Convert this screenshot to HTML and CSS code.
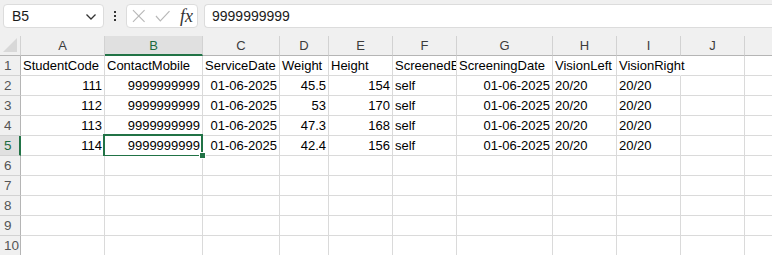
FILE: index.html
```html
<!DOCTYPE html>
<html>
<head>
<meta charset="utf-8">
<link rel="stylesheet" href="styles.css">
</head>
<body>
<div class="app">
  <div class="toolbar">
    <div class="namebox">
      <span class="name">B5</span>
      <svg class="chev" width="12" height="8" viewBox="0 0 12 8"><path d="M1.5 1.5 L6 6 L10.5 1.5" fill="none" stroke="#333" stroke-width="1.3"/></svg>
    </div>
    <div class="dots"><i></i><i></i><i></i></div>
    <div class="fxbox">
      <svg width="14" height="14" viewBox="0 0 14 14"><path d="M1 1 L13 13 M13 1 L1 13" stroke="#b8b8b8" stroke-width="1.2" fill="none"/></svg>
      <svg width="16" height="12" viewBox="0 0 16 12"><path d="M1 6 L5.5 11 L15 1" stroke="#b8b8b8" stroke-width="1.2" fill="none"/></svg>
      <span class="fx">fx</span>
    </div>
    <div class="formula">9999999999</div>
  </div>
  <div class="grid">
    <div class="c corner"><span class="tri"></span></div>
    <div class="c ch">A</div><div class="c ch sel">B</div><div class="c ch">C</div><div class="c ch">D</div><div class="c ch">E</div><div class="c ch">F</div><div class="c ch">G</div><div class="c ch">H</div><div class="c ch">I</div><div class="c ch">J</div><div class="c ch last"></div>

    <div class="c rh">1</div>
    <div class="c">StudentCode</div><div class="c">ContactMobile</div><div class="c">ServiceDate</div><div class="c">Weight</div><div class="c">Height</div><div class="c">ScreenedBy</div><div class="c">ScreeningDate</div><div class="c">VisionLeft</div><div class="c spill">VisionRight</div><div class="c"></div><div class="c last"></div>

    <div class="c rh">2</div>
    <div class="c r">111</div><div class="c r">9999999999</div><div class="c r">01-06-2025</div><div class="c r">45.5</div><div class="c r">154</div><div class="c">self</div><div class="c r">01-06-2025</div><div class="c">20/20</div><div class="c">20/20</div><div class="c"></div><div class="c last"></div>

    <div class="c rh">3</div>
    <div class="c r">112</div><div class="c r">9999999999</div><div class="c r">01-06-2025</div><div class="c r">53</div><div class="c r">170</div><div class="c">self</div><div class="c r">01-06-2025</div><div class="c">20/20</div><div class="c">20/20</div><div class="c"></div><div class="c last"></div>

    <div class="c rh">4</div>
    <div class="c r">113</div><div class="c r">9999999999</div><div class="c r">01-06-2025</div><div class="c r">47.3</div><div class="c r">168</div><div class="c">self</div><div class="c r">01-06-2025</div><div class="c">20/20</div><div class="c">20/20</div><div class="c"></div><div class="c last"></div>

    <div class="c rh sel">5</div>
    <div class="c r">114</div><div class="c r active">9999999999</div><div class="c r">01-06-2025</div><div class="c r">42.4</div><div class="c r">156</div><div class="c">self</div><div class="c r">01-06-2025</div><div class="c">20/20</div><div class="c">20/20</div><div class="c"></div><div class="c last"></div>

    <div class="c rh">6</div><div class="c"></div><div class="c"></div><div class="c"></div><div class="c"></div><div class="c"></div><div class="c"></div><div class="c"></div><div class="c"></div><div class="c"></div><div class="c"></div><div class="c last"></div>
    <div class="c rh">7</div><div class="c"></div><div class="c"></div><div class="c"></div><div class="c"></div><div class="c"></div><div class="c"></div><div class="c"></div><div class="c"></div><div class="c"></div><div class="c"></div><div class="c last"></div>
    <div class="c rh">8</div><div class="c"></div><div class="c"></div><div class="c"></div><div class="c"></div><div class="c"></div><div class="c"></div><div class="c"></div><div class="c"></div><div class="c"></div><div class="c"></div><div class="c last"></div>
    <div class="c rh">9</div><div class="c"></div><div class="c"></div><div class="c"></div><div class="c"></div><div class="c"></div><div class="c"></div><div class="c"></div><div class="c"></div><div class="c"></div><div class="c"></div><div class="c last"></div>
    <div class="c rh">10</div><div class="c"></div><div class="c"></div><div class="c"></div><div class="c"></div><div class="c"></div><div class="c"></div><div class="c"></div><div class="c"></div><div class="c"></div><div class="c"></div><div class="c last"></div>
  </div>
</div>
</body>
</html>
```
FILE: styles.css
```css
html, body {
  margin: 0;
  padding: 0;
  overflow: hidden;
  background: #ffffff;
}
.app {
  width: 772px;
  height: 255px;
  overflow: hidden;
  font-family: "Liberation Sans", Arial, sans-serif;
}
.toolbar {
  height: 36px;
  background: #f0f0f0;
  box-sizing: border-box;
  padding: 4px 0 0 3px;
  display: flex;
  align-items: flex-start;
}
.namebox {
  width: 101px;
  height: 24px;
  box-sizing: border-box;
  background: #fff;
  border: 1px solid #dcdcdc;
  border-radius: 4px;
  display: flex;
  align-items: center;
  justify-content: space-between;
  padding: 0 6px 0 8px;
}
.name {
  font-size: 14px;
  color: #1a1a1a;
}
.chev { margin-top: 1px; }
.dots {
  width: 22px;
  height: 24px;
  display: flex;
  flex-direction: column;
  align-items: center;
  justify-content: center;
  gap: 2px;
}
.dots i {
  display: block;
  width: 2px;
  height: 2px;
  background: #333;
}
.fxbox {
  width: 72px;
  height: 24px;
  box-sizing: border-box;
  background: #fff;
  border: 1px solid #dcdcdc;
  border-radius: 4px;
  display: flex;
  align-items: center;
  padding: 0 4px 0 5px;
  gap: 9px;
}
.fx {
  font-family: "Liberation Serif", "Times New Roman", serif;
  font-style: italic;
  font-size: 18px;
  color: #333;
  margin-left: 1px;
  line-height: 1;
}
.formula {
  margin-left: 6px;
  flex: 1;
  height: 24px;
  box-sizing: border-box;
  background: #fff;
  border: 1px solid #dcdcdc;
  border-right: none;
  border-radius: 4px 0 0 4px;
  font-size: 14px;
  color: #1a1a1a;
  padding: 0 0 0 7px;
  line-height: 22px;
}
.grid {
  display: grid;
  grid-template-columns: 21px 84px 98px 77px 49px 64px 64px 96px 64px 64px 64px 1fr;
  grid-template-rows: repeat(11, 20px);
  font-size: 13px;
  color: #000;
}
.c {
  box-sizing: border-box;
  border-right: 1px solid #dadada;
  border-bottom: 1px solid #dadada;
  padding: 0 2px 0 2px;
  line-height: 20px;
  white-space: nowrap;
  overflow: hidden;
  background: #fff;
  position: relative;
}
.c.r { text-align: right; }
.c.last { border-right: none; }
.c.spill {
  overflow: visible;
  border-right-color: #fff;
  z-index: 1;
  background: transparent;
}
.ch, .corner {
  background: #f0f0f0;
  text-align: center;
  color: #3c3c3c;
  border-right: 1px solid #d2d2d2;
  border-bottom: 1px solid #b5b5b5;
  font-size: 13px;
  padding: 0;
  line-height: 19px;
}
.ch.last { border-right: none; }
.ch.sel {
  background: #e0e0e0;
  color: #1d6b3f;
  border-bottom: 2px solid #217346;
}
.corner { overflow: hidden; }
.tri {
  position: absolute;
  right: 3px;
  bottom: 3px;
  width: 0;
  height: 0;
  border-left: 14px solid transparent;
  border-bottom: 14px solid #d8d8d8;
}
.rh {
  background: #f0f0f0;
  color: #555;
  border-right: 1px solid #b5b5b5;
  border-bottom: 1px solid #d2d2d2;
  font-size: 13.5px;
  padding: 0 0 0 4px;
}
.rh.sel {
  background: #e0e0e0;
  color: #1d6b3f;
  border-right: 2px solid #217346;
}
.active { overflow: visible; }
.active::before {
  content: "";
  position: absolute;
  left: -2px;
  top: -2px;
  right: -1px;
  bottom: -2px;
  border: 2px solid #217346;
  pointer-events: none;
}
.active::after {
  content: "";
  position: absolute;
  right: -4px;
  bottom: -4px;
  width: 5px;
  height: 5px;
  background: #217346;
  border: 1px solid #fff;
  z-index: 2;
}
```
